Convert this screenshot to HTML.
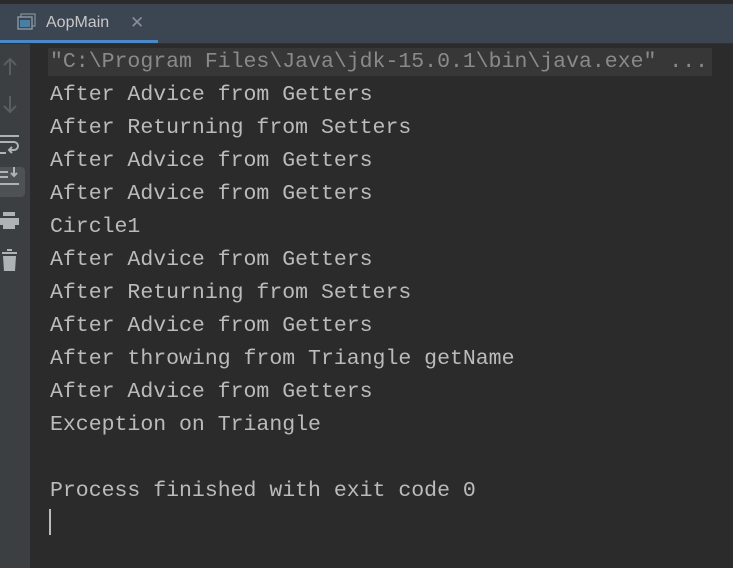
<!DOCTYPE html>
<html><head><style>
html,body{margin:0;padding:0;width:733px;height:568px;overflow:hidden;background:#2b2b2b;font-family:"Liberation Mono",monospace}
.top{position:absolute;left:0;top:0;width:733px;height:4px;background:#2b2b2b}
.tabbar{position:absolute;left:0;top:4px;width:733px;height:39px;background:#3c4552}
.ul{position:absolute;left:0;top:40px;width:158px;height:4px;background:#4a88c7}
.bl{position:absolute;left:0;top:43px;width:733px;height:1px;background:#323232}
.tab{position:absolute;left:46px;top:14px;color:#c8c8c8;font:16px "Liberation Sans",sans-serif}
.x{position:absolute;left:130px;top:13px;color:#8a8f95;font:17px "Liberation Sans",sans-serif}
.gut{position:absolute;left:0;top:44px;width:30px;height:524px;background:#3c3f41}
.sel{position:absolute;left:0;top:167px;width:25px;height:30px;background:#4e5254;border-radius:0 4px 4px 0}
.hl{position:absolute;left:48px;top:48px;width:664px;height:28px;background:#373737}
.lines{position:absolute;left:50px;top:46px;font-size:21.5px;line-height:33px;color:#bbbbbb;white-space:pre}
.g{color:#8a8a8a}
.cur{position:absolute;left:49px;top:509px;width:2px;height:26px;background:#bbbbbb}
svg{position:absolute}
</style></head><body>
<div class="top"></div>
<div class="tabbar"></div>
<div class="ul"></div><div class="bl"></div>
<svg style="left:17px;top:13px" width="20" height="18"><rect x="4" y="1" width="14" height="12" fill="none" stroke="#7f8b96" stroke-width="1.3"/><rect x="1" y="4" width="14" height="12" fill="#3c4552" stroke="#8fa0ae" stroke-width="1.3"/><rect x="3" y="7" width="10" height="7" fill="#4a7fa5"/></svg>
<div class="tab">AopMain</div><div class="x">✕</div>
<div class="gut"></div>
<div class="sel"></div>
<svg style="left:0;top:56px" width="26" height="240" stroke="#5a5e61" fill="none" stroke-width="2">
<path d="M10 3v16M4 9l6-6 6 6"/>
<path d="M10 40v16M4 50l6 6 6-6"/>
<g stroke="#aeb3b6"><path d="M0 80h19M0 86h14a4 4 0 0 1 0 8h-4M12 91l-3 3 3 3M0 97h6"/>
<path d="M0 116h8M0 121h8M0 128h19M14 111v9M11 117l3 3 3-3"/></g>
<g fill="#aeb3b6" stroke="none"><rect x="3" y="156" width="12" height="4"/><rect x="0" y="162" width="19" height="7"/><rect x="3" y="168" width="12" height="5"/>
<rect x="2" y="196" width="15" height="2"/><rect x="7" y="193" width="5" height="2"/><path d="M3 200h13l-1 15H4z"/></g>
</svg>
<div class="hl"></div>
<div class="lines"><span class="g">"C:\Program Files\Java\jdk-15.0.1\bin\java.exe" ...</span>
After Advice from Getters
After Returning from Setters
After Advice from Getters
After Advice from Getters
Circle1
After Advice from Getters
After Returning from Setters
After Advice from Getters
After throwing from Triangle getName
After Advice from Getters
Exception on Triangle

Process finished with exit code 0</div>
<div class="cur"></div>
</body></html>
